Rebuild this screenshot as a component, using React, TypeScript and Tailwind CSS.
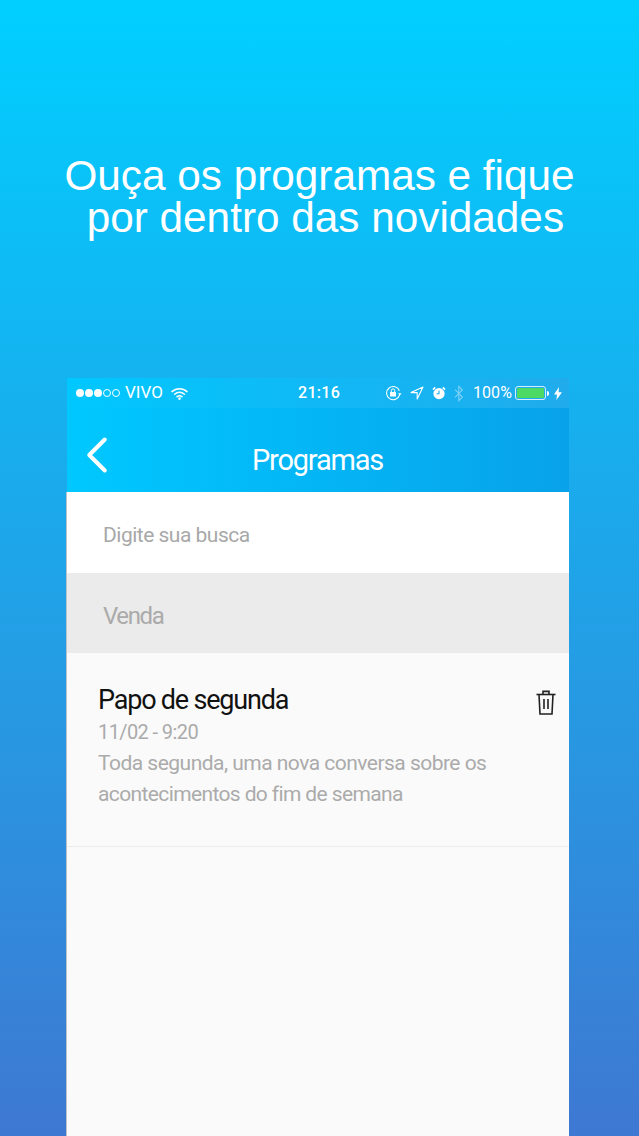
import { ChevronLeft } from 'lucide-react'

function Wifi() {
  return (
    <svg width="17" height="13" viewBox="0 0 17 13" fill="none" stroke="white" strokeWidth="1.5" strokeLinecap="round">
      <path d="M1 4.6C5.2 .7 11.8 .7 16 4.6" />
      <path d="M3.6 7.2C6.4 4.7 10.6 4.7 13.4 7.2" />
      <path d="M6 9.7C7.4 8.6 9.6 8.6 11 9.7" />
      <circle cx="8.5" cy="11.6" r="0.6" fill="white" />
    </svg>
  )
}

function StatusIcons() {
  return (
    <div className="flex items-center">
      <svg width="17" height="16" viewBox="0 0 17 16" fill="none" className="mr-[8px]">
        <path d="M14.6 9.8A6.6 6.6 0 1 1 14.4 5.8" stroke="white" strokeWidth="1.1" />
        <path d="M13 8.2h3.6l-1.8 2.2z" fill="white" />
        <rect x="5" y="7" width="6" height="4.6" rx="0.6" fill="white" />
        <path d="M6.3 7V5.6a1.7 1.7 0 0 1 3.4 0V7" stroke="white" strokeWidth="1" />
      </svg>
      <svg width="14" height="14" viewBox="0 0 14 14" fill="none" className="mr-[8px]">
        <path d="M13 1 1 6.6h6.2V13z" stroke="white" strokeWidth="1.1" strokeLinejoin="round" />
      </svg>
      <svg width="14" height="14" viewBox="0 0 14 14" className="mr-[8px]">
        <circle cx="7" cy="7.6" r="5.6" fill="white" />
        <path d="M1 3.6 3.2 1.4M13 3.6l-2.2-2.2" stroke="white" strokeWidth="1.6" />
        <path d="M7 4.4v3.4H4.6" stroke="#1ab0f0" strokeWidth="1.1" fill="none" />
      </svg>
      <svg width="10" height="17" viewBox="0 0 10 17" fill="none" className="mr-[9px]">
        <path d="M1 4.6 8.4 12 4.8 15.6V1.4L8.4 5 1 12.4" stroke="#7fd0f6" strokeWidth="1.1" />
      </svg>
      <span className="text-[16px] tracking-[0.1px] text-white mr-[3px]">100%</span>
      <div className="flex items-center mr-[5px]">
        <div className="w-[31px] h-[14px] rounded-[3px] border border-white/80 p-[1px]">
          <div className="w-full h-full rounded-[1px] bg-[#4cd964]" />
        </div>
        <div className="w-[2px] h-[5px] bg-white rounded-r-sm ml-[1px]" />
      </div>
      <svg width="8" height="13" viewBox="0 0 8 13">
        <path d="M5 0 0 7.4h3L2.4 13 8 5.2H4.6z" fill="white" />
      </svg>
    </div>
  )
}

export default function App() {
  return (
    <div className="h-[1136px] overflow-hidden flex flex-col bg-linear-to-b/srgb from-[#00d0ff] to-[#3e78d2] font-['Roboto',sans-serif]">
      <h1 className="pt-[155px] h-[378px] text-center text-[42.3px] leading-[42px] text-white font-['Liberation_Sans',sans-serif]">
        Ouça os programas e fique
        <br />
        &nbsp;por dentro das novidades
      </h1>

      <div className="ml-[67px] w-[502px] h-[114px] bg-linear-to-r/srgb from-[#00c8ff] to-[#08a2ea]">
        <div className="h-[30px] pl-[9px] pr-[7px] flex items-center justify-between relative bg-linear-to-r/srgb from-transparent to-[#ffffff]/10">
          <div className="flex items-center">
            <div className="flex gap-[1px] mr-[5px]">
              <span className="w-[8px] h-[8px] rounded-full bg-white" />
              <span className="w-[8px] h-[8px] rounded-full bg-white" />
              <span className="w-[8px] h-[8px] rounded-full bg-white" />
              <span className="w-[8px] h-[8px] rounded-full border border-white" />
              <span className="w-[8px] h-[8px] rounded-full border border-white" />
            </div>
            <span className="text-[17px] text-white mr-[8px]">VIVO</span>
            <Wifi />
          </div>
          <span className="absolute left-[231px] text-[16px] font-medium tracking-[0.3px] text-white">21:16</span>
          <StatusIcons />
        </div>
        <div className="h-[84px] relative flex items-center justify-center">
          <ChevronLeft className="absolute left-[-1px] top-[16px] text-white" size={62} strokeWidth={4} absoluteStrokeWidth />
          <span className="text-[29px] tracking-[-1.2px] text-white mt-[22px] mr-[1px]">Programas</span>
        </div>
      </div>

      <div className="ml-[66px] w-[503px] flex-1 flex flex-col bg-[#fafafa] border-l border-[#b9c4ca]">
        <div className="h-[81px] bg-white flex items-center pl-[36px] pt-[6px] text-[21px] tracking-[-0.5px] text-[#a8a8a8]">
          Digite sua busca
        </div>
        <div className="h-[80px] bg-[#ebebeb] flex items-center pl-[36px] pt-[6px] text-[24px] tracking-[-1.4px] text-[#aaaaaa]">
          Venda
        </div>

        <div className="h-[194px] border-b border-[#ececec] pl-[31px] pr-[13px] pt-[28px] flex justify-between">
          <div>
            <div className="text-[27px] leading-[38px] tracking-[-1.2px] text-[#111111]">Papo de segunda</div>
            <div className="text-[20px] leading-[26px] tracking-[-0.6px] text-[#ababab]">11/02 - 9:20</div>
            <p className="text-[21px] leading-[31px] tracking-[-0.52px] text-[#ababab] mt-[3px]">
              Toda segunda, uma nova conversa sobre os
              <br />
              <span className="tracking-[-0.62px]">acontecimentos do fim de semana</span>
            </p>
          </div>
          <svg width="20" height="26" viewBox="0 0 20 26" fill="none" stroke="#222222" strokeWidth="1.6" className="mt-[9px]">
            <path d="M0.5 4.5h19" />
            <path d="M7 4.5V1.4h6v3.1" />
            <path d="M3 4.5l1 19.5h12l1-19.5" />
            <path d="M8 9v10M12 9v10" />
          </svg>
        </div>
      </div>
    </div>
  )
}
